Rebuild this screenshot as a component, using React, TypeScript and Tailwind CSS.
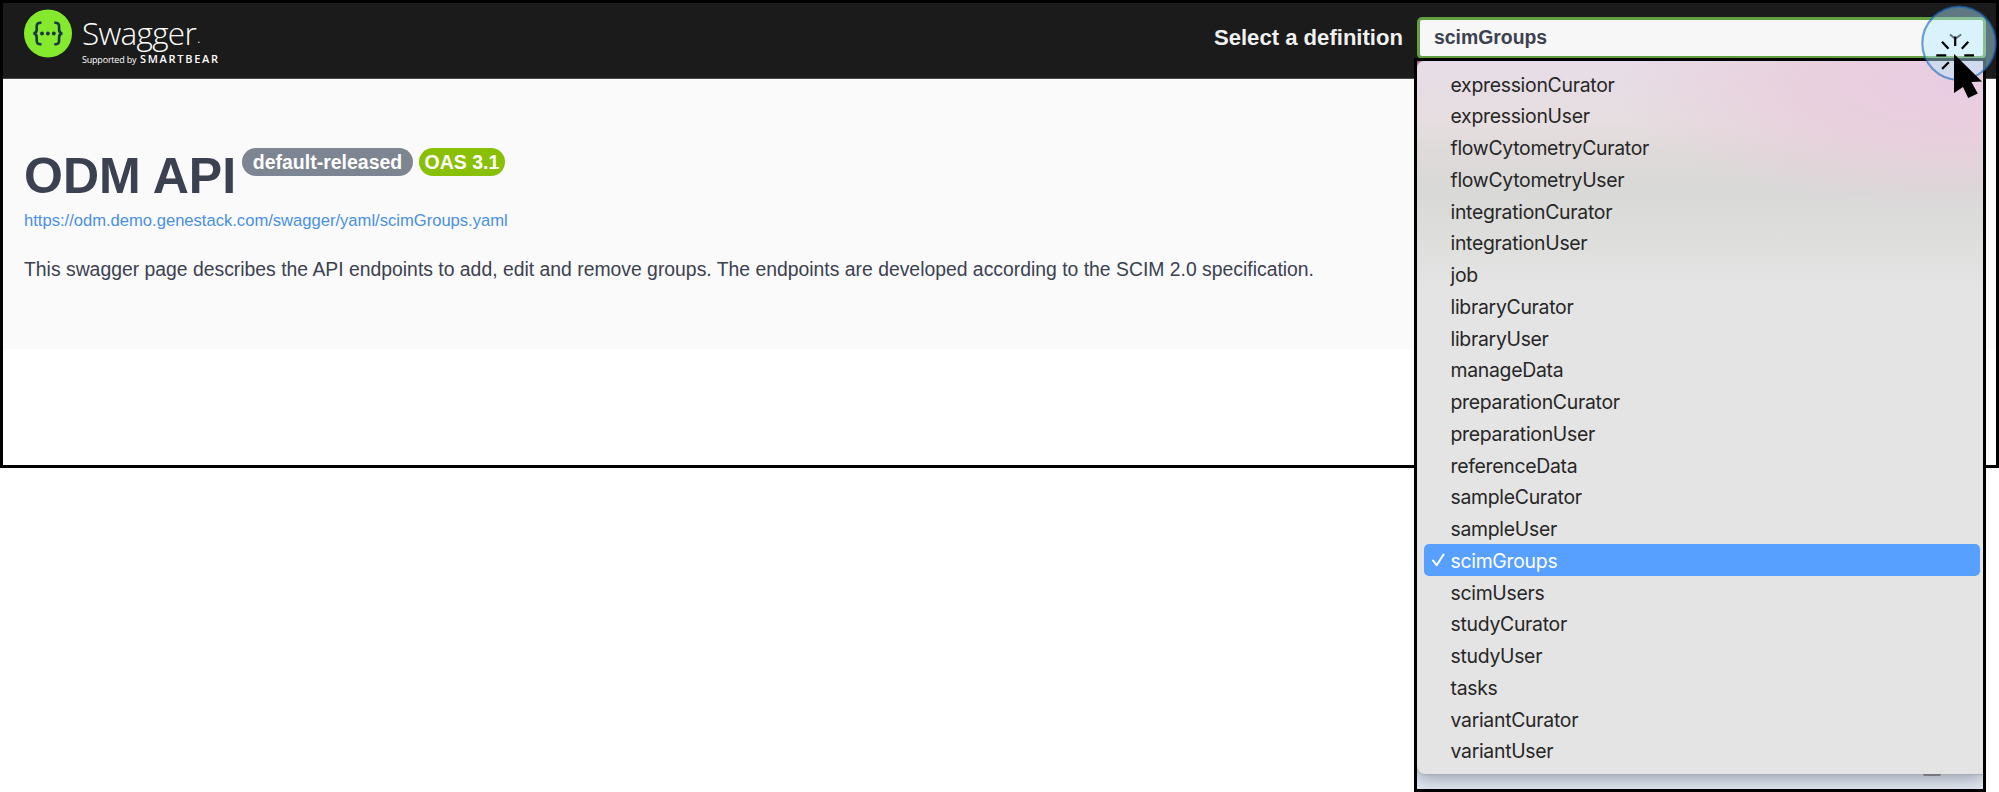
const definitions = [
  'expressionCurator', 'expressionUser', 'flowCytometryCurator', 'flowCytometryUser',
  'integrationCurator', 'integrationUser', 'job', 'libraryCurator', 'libraryUser',
  'manageData', 'preparationCurator', 'preparationUser', 'referenceData',
  'sampleCurator', 'sampleUser', 'scimGroups', 'scimUsers', 'studyCurator',
  'studyUser', 'tasks', 'variantCurator', 'variantUser',
];

function Logo() {
  return (
    <div className="flex pl-[21px] pt-[6px]">
      <svg width="48" height="49" viewBox="0 0 48 49" className="shrink-0">
        <circle cx="24" cy="24.5" r="24" fill="#85ea2d" />
        <g fill="none" stroke="#173647" strokeWidth="2.6">
          <path d="M17.5 13.8c-3.6-.4-4.8.8-4.8 3.6v3.2c0 2.4-.8 3.6-3.2 3.9 2.4.3 3.2 1.5 3.2 3.9v3.2c0 2.8 1.2 4 4.8 3.6" />
          <path d="M30.3 13.8c3.6-.4 4.8.8 4.8 3.6v3.2c0 2.4.8 3.6 3.2 3.9-2.4.3-3.2 1.5-3.2 3.9v3.2c0 2.8-1.2 4-4.8 3.6" />
        </g>
        <g fill="#173647">
          <circle cx="18" cy="24.5" r="1.9" />
          <circle cx="23.9" cy="24.5" r="1.9" />
          <circle cx="29.8" cy="24.5" r="1.9" />
        </g>
      </svg>
      <div className="ml-[10px] flex flex-col text-white">
        <div className="flex h-[43px] items-end whitespace-nowrap font-['Open_Sans'] text-[31.5px] font-[340] leading-[38px] tracking-[-0.7px]">
          Swagger<span className="ml-[1px] text-[15px] leading-[29px]">.</span>
        </div>
        <div className="flex items-baseline whitespace-nowrap font-['Open_Sans'] leading-[13px]">
          <span className="w-[58px] text-[9px] tracking-[-0.2px]">Supported by</span>
          <span className="text-[11px] font-semibold tracking-[1.7px]">SMARTBEAR</span>
        </div>
      </div>
    </div>
  );
}

function ClickPointer() {
  return (
    <svg className="absolute left-[1914px] top-0" width="85" height="110" viewBox="1914 0 85 110">
      <circle cx="1959" cy="43.3" r="36.7" fill="#b5eaff" fillOpacity="0.45" stroke="#1668b8" strokeOpacity="0.6" strokeWidth="2.2" />
      <path d="M1950 34.5l5.3 4.3 5.8-4.3" fill="none" stroke="#55727d" strokeWidth="1.8" />
      <g stroke="#000" strokeWidth="2.2">
        <path d="M1955.2 36.5v9.5M1942 41.8l6.5 7M1968.3 41.8l-6.5 7M1936.3 55.3h10M1964.3 55.3h9.7M1948.8 62.3l-6.7 6.6" />
      </g>
      <path d="M1954 54l28 27.5-10.6.5 6.4 11.5-9.6 4.6-5.2-11.1-9 6z" fill="#000" />
    </svg>
  );
}

function DefinitionMenu() {
  return (
    <div className="absolute left-[1413.5px] top-[58px] h-[733.5px] w-[572px] overflow-hidden border-[3px] border-black bg-[linear-gradient(#c4446f_0px,#d98aa5_90px,#000_90px,#000_172px,#e1e7f0_172px)]">
      <ul className="relative h-[712.5px] rounded-[8px] rounded-r-none bg-[#e4e4e4] bg-[radial-gradient(ellipse_340px_125px_at_95%_25px,#e9cce2_0%,#e9cddccc_45%,#e9cddc00_100%),linear-gradient(180deg,#e7dde8_0px,#e6dee0_60px,#dedad9_95px,#d9d9d8_130px,#dededd_180px,#e4e4e4_225px)] pl-[7px] pr-[3px] pt-[6.6px] font-[Inter] text-[19.4px] leading-[34.3px] tracking-[-0.28px] text-[#262626] shadow-[0_0_1px_1px_#aab0ba,0_3px_18px_#8c93a4]">
        {definitions.map((name) =>
          name === 'scimGroups' ? (
            <li key={name} className="flex h-[31.76px] rounded-[5px] bg-[#57a0ff] pl-[8px] text-white">
              <svg width="19" height="16" viewBox="0 0 19 16" className="mt-[8px] shrink-0">
                <path d="M1 8.5l3.7 4.7L11.5 2.5" fill="none" stroke="#fff" strokeWidth="2" strokeLinecap="round" strokeLinejoin="round" />
              </svg>
              {name}
            </li>
          ) : (
            <li key={name} className="h-[31.76px] pl-[27px]">{name}</li>
          ),
        )}
      </ul>
      <div className="relative ml-[506px] h-[2px] w-[18px] rounded-b-full bg-[#77777a]" />
    </div>
  );
}

export default function App() {
  return (
    <div className="relative h-[792px] w-[1999px] overflow-hidden bg-white font-['Liberation_Sans',sans-serif] text-[#3b4151]">
      <div className="h-[468px] border-[3px] border-black">
        <header className="flex h-[76px] justify-between border-b border-[#4a4a4a] bg-[#1b1b1b]">
          <Logo />
          <div className="flex pr-[10px] pt-[14px]">
            <label className="mr-[14px] whitespace-nowrap text-[22.1px] font-bold leading-[42px] text-[#f0f0f0]">Select a definition</label>
            <div className="h-[42px] w-[569px] rounded-[5px] border-[3px] border-[#62a03f] bg-[#f7f7f7] pl-[14px] text-[19.4px] font-bold leading-[35px]">scimGroups</div>
          </div>
        </header>
        <main className="h-[270px] bg-[#fafafa] pl-[21px] pt-[69px]">
          <div className="flex">
            <h1 className="w-[218px] whitespace-nowrap text-[50px] font-bold leading-[56px]">ODM API</h1>
            <span className="mr-[6px] h-[28px] w-[171px] rounded-full bg-[#7d8492] text-center text-[19.5px] font-bold leading-[29px] text-white">default-released</span>
            <span className="h-[28px] w-[86px] rounded-full bg-[#89bf04] text-center text-[19.5px] font-bold leading-[29px] text-white">OAS 3.1</span>
          </div>
          <a className="mt-px block w-max text-[16.58px] leading-[32px] text-[#4990e2]">https://odm.demo.genestack.com/swagger/yaml/scimGroups.yaml</a>
          <p className="mt-[17px] w-max text-[19.36px] leading-[30px]">This swagger page describes the API endpoints to add, edit and remove groups. The endpoints are developed according to the SCIM 2.0 specification.</p>
        </main>
      </div>
      <DefinitionMenu />
      <ClickPointer />
    </div>
  );
}
